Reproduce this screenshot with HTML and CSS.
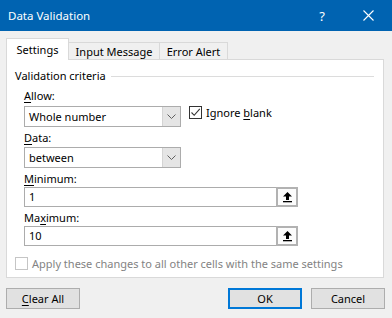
FILE: index.html
```html
<!DOCTYPE html>
<html lang="en">
<head>
    <meta charset="UTF-8">
    <title>Data Validation</title>
    <link rel="stylesheet" href="styles.css">
</head>
<body>
    <div class="dialog">
        <div class="titlebar">
            <span class="title">Data Validation</span>
            <span class="help">?</span>
            <svg class="close" width="11" height="11" viewBox="0 0 11 11">
                <path d="M0.5 0.5 L10.5 10.5 M10.5 0.5 L0.5 10.5" stroke="#fff" stroke-width="1.1" fill="none"/>
            </svg>
        </div>

        <div class="tabs">
            <div class="tab active">Settings</div>
            <div class="tab tab-input">Input Message</div>
            <div class="tab tab-error">Error Alert</div>
        </div>

        <div class="panel">
            <div class="group-title">
                <span>Validation criteria</span>
                <span class="group-line"></span>
            </div>

            <div class="fields">
                <div class="label"><u>A</u>llow:</div>
                <div class="row">
                    <div class="combo">
                        <span class="combo-value">Whole number</span>
                        <span class="combo-btn">
                            <svg width="9" height="5" viewBox="0 0 9 5"><path d="M0.5 0.5 L4.5 4.5 L8.5 0.5" stroke="#606060" fill="none"/></svg>
                        </span>
                    </div>
                    <label class="check">
                        <span class="box">
                            <svg width="11" height="11" viewBox="0 0 11 11"><path d="M1.5 5.5 L4.2 8.3 L9.8 1.8" stroke="#333" stroke-width="1.1" fill="none"/></svg>
                        </span>
                        <span>Ignore <u>b</u>lank</span>
                    </label>
                </div>

                <div class="label"><u>D</u>ata:</div>
                <div class="combo">
                    <span class="combo-value">between</span>
                    <span class="combo-btn">
                        <svg width="9" height="5" viewBox="0 0 9 5"><path d="M0.5 0.5 L4.5 4.5 L8.5 0.5" stroke="#606060" fill="none"/></svg>
                    </span>
                </div>

                <div class="label label-min"><u>M</u>inimum:</div>
                <div class="refedit">
                    <span class="ref-value">1</span>
                    <span class="ref-btn">
                        <svg width="11" height="12" viewBox="0 0 11 12"><path d="M5.5 1 L10 5.5 L7 5.5 L7 9 L4 9 L4 5.5 L1 5.5 Z" fill="#000"/><rect x="1" y="10" width="9" height="1.3" fill="#000"/></svg>
                    </span>
                </div>

                <div class="label label-max">Ma<u>x</u>imum:</div>
                <div class="refedit">
                    <span class="ref-value">10</span>
                    <span class="ref-btn">
                        <svg width="11" height="12" viewBox="0 0 11 12"><path d="M5.5 1 L10 5.5 L7 5.5 L7 9 L4 9 L4 5.5 L1 5.5 Z" fill="#000"/><rect x="1" y="10" width="9" height="1.3" fill="#000"/></svg>
                    </span>
                </div>
            </div>

            <label class="check apply">
                <span class="box disabled"></span>
                <span>Apply these changes to all other cells with the same settings</span>
            </label>
        </div>

        <div class="buttons">
            <button class="btn"><u>C</u>lear All</button>
            <div class="spacer"></div>
            <button class="btn default">OK</button>
            <button class="btn">Cancel</button>
        </div>
    </div>
</body>
</html>
```

FILE: styles.css
```css
body {
    margin: 0;
    padding: 0;
    background: #f0f0f0;
    font-family: "Noto Sans", "Liberation Sans", sans-serif;
    font-size: 11px;
    color: #000;
}

.dialog {
    width: 392px;
    height: 318px;
    overflow: hidden;
}

u {
    text-decoration-thickness: 1px;
    text-underline-offset: 2px;
}

/* title bar */
.titlebar {
    height: 31px;
    background: #0063b1;
    color: #fff;
    display: flex;
    align-items: center;
    font-size: 11.5px;
}

.title {
    padding-left: 8px;
    flex: 1;
}

.help {
    font-size: 13px;
    margin-right: 38px;
}

.close {
    margin-right: 18px;
}

/* tabs */
.tabs {
    display: flex;
    align-items: flex-end;
    padding-left: 6px;
    margin-top: 7px;
    height: 21px;
}

.tab {
    box-sizing: border-box;
    height: 17px;
    border: 1px solid #d9d9d9;
    border-bottom: none;
    line-height: 17px;
    text-align: center;
    margin-left: -1px;
}

.tab.active {
    height: 22px;
    width: 63px;
    margin-left: 0;
    background: #fff;
    line-height: 21px;
    position: relative;
    z-index: 1;
    margin-bottom: -1px;
}

.tab-input {
    width: 92px;
}

.tab-error {
    width: 69px;
}

/* panel */
.panel {
    box-sizing: border-box;
    width: 378px;
    height: 219px;
    margin-left: 6px;
    background: #fff;
    border: 1px solid #d9d9d9;
    padding: 8px 0 0 8px;
}

.group-title {
    display: flex;
    align-items: center;
    line-height: 16px;
}

.group-line {
    flex: 1;
    height: 1px;
    background: #dcdcdc;
    margin: 1px 9px 0 5px;
}

.fields {
    padding-left: 9px;
    padding-top: 4px;
}

.label {
    line-height: 16px;
    margin-bottom: 1px;
}

.label-min,
.label-max {
    margin-top: 3px;
    margin-bottom: 0;
}

.row {
    display: flex;
    align-items: flex-start;
    margin-bottom: 3px;
}

.fields > .label:first-child {
    margin-bottom: 2px;
}

.combo {
    box-sizing: border-box;
    width: 157px;
    height: 21px;
    border: 1px solid #acacac;
    display: flex;
    align-items: stretch;
}

.combo-value {
    flex: 1;
    padding-left: 4px;
    line-height: 19px;
}

.combo-btn {
    width: 17px;
    background: #e5e5e5;
    border-left: 1px solid #d4d4d4;
    display: flex;
    align-items: center;
    justify-content: center;
}

.check {
    display: flex;
    align-items: center;
    gap: 4px;
    margin-left: 8px;
    height: 13px;
}

.box {
    box-sizing: border-box;
    width: 13px;
    height: 13px;
    border: 1px solid #333;
    display: flex;
    align-items: center;
    justify-content: center;
}

.box.disabled {
    border-color: #c5c5c5;
}

.refedit {
    box-sizing: border-box;
    width: 274px;
    height: 20px;
    border: 1px solid #acacac;
    display: flex;
}

.ref-value {
    flex: 1;
    padding-left: 4px;
    line-height: 18px;
}

.ref-btn {
    box-sizing: border-box;
    width: 22px;
    margin: -1px -1px -1px 0;
    height: 20px;
    border: 2px solid #b2b2b2;
    background: #fcfcfc;
    display: flex;
    align-items: center;
    justify-content: center;
}

.apply {
    margin: 11px 0 0 0;
    color: #838383;
}

/* buttons */
.buttons {
    display: flex;
    padding: 0 7px 0 6px;
    margin-top: 10px;
    gap: 9px;
}

.spacer {
    flex: 1;
}

.btn {
    box-sizing: border-box;
    width: 74px;
    height: 21px;
    background: #e1e1e1;
    border: 1px solid #adadad;
    font-family: "Noto Sans", "Liberation Sans", sans-serif;
    font-size: 11px;
    color: #000;
    padding: 0;
}

.btn.default {
    border: 2px solid #0078d7;
}
```
